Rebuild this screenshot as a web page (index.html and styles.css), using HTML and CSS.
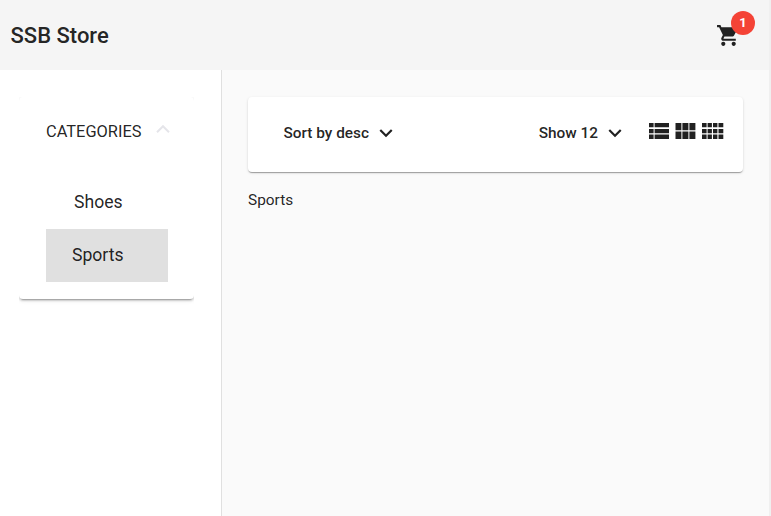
FILE: index.html
```html
<!DOCTYPE html>
<html lang="en">
<head>
<meta charset="utf-8">
<title>SSB Store</title>
<link rel="stylesheet" href="styles.css">
</head>
<body>
<div class="app">
  <header class="toolbar">
    <h1 class="brand">SSB Store</h1>
    <div class="cart">
      <svg width="25" height="25" viewBox="0 0 24 24" preserveAspectRatio="none"><path d="M7 18c-1.1 0-1.99.9-1.99 2S5.9 22 7 22s2-.9 2-2-.9-2-2-2zM1 2v2h2l3.6 7.59-1.35 2.45c-.16.28-.25.61-.25.96 0 1.1.9 2 2 2h12v-2H7.42c-.14 0-.25-.11-.25-.25l.03-.12.9-1.63h7.45c.75 0 1.41-.41 1.75-1.03l3.58-6.49c.08-.14.12-.31.12-.48 0-.55-.45-1-1-1H5.21l-.94-2H1zm16 16c-1.1 0-1.99.9-1.99 2s.89 2 1.99 2 2-.9 2-2-.9-2-2-2z"/></svg>
      <span class="badge">1</span>
    </div>
  </header>
  <div class="body">
    <aside class="sidebar">
      <section class="panel">
        <div class="panel-header">
          <span>CATEGORIES</span>
          <svg class="panel-arrow" width="14" height="8" viewBox="0 0 14 8"><path d="M1 7.2 7 1.2l6 6"/></svg>
        </div>
        <ul class="categories">
          <li class="category">Shoes</li>
          <li class="category selected">Sports</li>
        </ul>
      </section>
    </aside>
    <main class="content">
      <div class="card">
        <button class="menu">Sort by desc <svg width="26" height="26" viewBox="0 0 24 24"><path d="M16.59 8.59 12 13.17 7.41 8.59 6 10l6 6 6-6z"/></svg></button>
        <div class="right">
          <button class="menu">Show 12 <svg width="26" height="26" viewBox="0 0 24 24"><path d="M16.59 8.59 12 13.17 7.41 8.59 6 10l6 6 6-6z"/></svg></button>
          <div class="views">
            <svg width="20" height="16" viewBox="0 0 20 16"><path d="M0 0h4.6v4.3H0zM5.6 0H20v4.3H5.6zM0 6h4.6v4.3H0zM5.6 6H20v4.3H5.6zM0 11.5h4.6V16H0zM5.6 11.5H20V16H5.6z"/></svg>
            <svg width="21" height="16" viewBox="0 0 21 16"><path d="M.5 0h5.9v7.2H.5zM7.4 0h6v7.2h-6zM14.4 0h6v7.2h-6zM.5 8.4h5.9V16H.5zM7.4 8.4h6V16h-6zM14.4 8.4h6V16h-6z"/></svg>
            <svg width="22" height="16" viewBox="0 0 22 16"><path d="M0 0h4.6v4.3H0zM5.6 0h4.3v4.3H5.6zM11 0h4.4v4.3H11zM16.5 0h4.8v4.3h-4.8zM0 6h4.6v4.3H0zM5.6 6h4.3v4.3H5.6zM11 6h4.4v4.3H11zM16.5 6h4.8v4.3h-4.8zM0 11.5h4.6V16H0zM5.6 11.5h4.3V16H5.6zM11 11.5h4.4V16H11zM16.5 11.5h4.8V16h-4.8z"/></svg>
          </div>
        </div>
      </div>
      <p class="result">Sports</p>
    </main>
  </div>
</div>
</body>
</html>
```
FILE: styles.css
```css
* { box-sizing: border-box; }
body {
  margin: 0;
  background: #fafafa;
  color: rgba(0, 0, 0, 0.87);
  font-family: Roboto, sans-serif;
}
svg { display: block; fill: #212121; flex: none; }
.app {
  height: 516px;
  display: flex;
  flex-direction: column;
  border-right: 2px solid #f0f0f0;
}
.toolbar {
  height: 70px;
  flex: none;
  display: flex;
  align-items: center;
  justify-content: space-between;
  padding: 0 28px 0 10.5px;
  background: #f5f5f5;
}
.brand {
  margin: 2px 0 0;
  font-size: 22px;
  font-weight: 500;
  line-height: 32px;
}
.cart { position: relative; margin-top: 1px; }
.badge {
  position: absolute;
  top: -12px;
  right: -14px;
  width: 24px;
  height: 24px;
  border-radius: 50%;
  background: #f44336;
  color: #fff;
  font-size: 13px;
  font-weight: 700;
  line-height: 23px;
  text-align: center;
}
.body { flex: 1; display: flex; }
.sidebar {
  width: 222px;
  flex: none;
  padding: 27px 27px 0 19px;
  background: #fff;
  border-right: 1px solid #e0e0e0;
}
.panel {
  height: 202px;
  padding: 0 26px 0 27px;
  border-radius: 4px;
  background: #fff;
  box-shadow: 0 3px 1px -2px rgba(0, 0, 0, 0.2), 0 2px 2px 0 rgba(0, 0, 0, 0.14), 0 1px 5px 0 rgba(0, 0, 0, 0.12);
  clip-path: inset(0 0 -8px 0);
}
.panel-header {
  height: 69px;
  display: flex;
  align-items: center;
  gap: 15px;
  font-size: 16.4px;
  white-space: nowrap;
}
.panel-arrow {
  fill: none;
  stroke: #e5e5ea;
  stroke-width: 2;
  margin-top: -5px;
}
.categories { list-style: none; margin: 9px 0 0; padding: 0; }
.category {
  height: 54px;
  padding-left: 28px;
  font-size: 17.6px;
  line-height: 54px;
}
.category.selected {
  height: 53px;
  padding-left: 26px;
  line-height: 53px;
  background: #e0e0e0;
}
.content { flex: 1; padding: 27px 26px 0; }
.card {
  height: 75px;
  display: flex;
  align-items: center;
  justify-content: space-between;
  padding: 0 19px 4px 35.4px;
  border-radius: 4px;
  background: #fff;
  box-shadow: 0 2px 1px -1px rgba(0, 0, 0, 0.2), 0 1px 1px 0 rgba(0, 0, 0, 0.14), 0 1px 3px 0 rgba(0, 0, 0, 0.12);
}
.menu {
  display: flex;
  align-items: center;
  gap: 4px;
  padding: 0;
  border: 0;
  background: none;
  color: inherit;
  font: 500 15.4px/24px Roboto, sans-serif;
}
.right { display: flex; align-items: center; gap: 21px; }
.views { display: flex; gap: 6px; margin-top: -4px; }
.result { margin: 18px 0 0; font-size: 15.4px; line-height: 20px; }
```
